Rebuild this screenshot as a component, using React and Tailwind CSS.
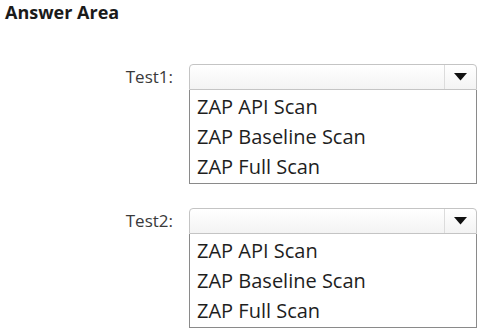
export default function App() {
  const items = ["ZAP API Scan", "ZAP Baseline Scan", "ZAP Full Scan"];
  const Row = ({ label }) => (
    <div className="flex items-start">
      <div className="w-[174px] h-[26px] flex items-center justify-end text-[17px] text-[#3a3a3a] pr-[1px]">
        {label}
      </div>
      <div className="ml-[15px] w-[288px] flex flex-col">
        <div className="h-[26px] flex border border-[#c4c4c4] rounded-t-[4px] bg-gradient-to-b from-white to-[#f3f3f3]">
          <div className="flex-1" />
          <div className="w-[32px] border-l border-[#dcdcdc] flex items-center justify-center">
            <svg width="13" height="8" viewBox="0 0 13 8">
              <polygon points="0,0 13,0 6.5,7.5" fill="#111" />
            </svg>
          </div>
        </div>
        <div className="border border-t-0 border-[#8a8a8a] bg-white pl-[7px] pt-[2px] pb-[1px]">
          {items.map((t) => (
            <div key={t} className="h-[30px] flex items-center text-[20px] text-[#1e1e1e]">
              {t}
            </div>
          ))}
        </div>
      </div>
    </div>
  );
  return (
    <div className="w-[481px] h-[329px] bg-white overflow-hidden" style={{ fontFamily: '"Open Sans", "Noto Sans", sans-serif' }}>
      <div className="pl-[5px] pt-[1px] text-[18px] font-bold text-[#1a1a1a] leading-[22px]">Answer Area</div>
      <div className="mt-[41px] flex flex-col gap-[24px]">
        <Row label="Test1:" />
        <Row label="Test2:" />
      </div>
    </div>
  );
}
